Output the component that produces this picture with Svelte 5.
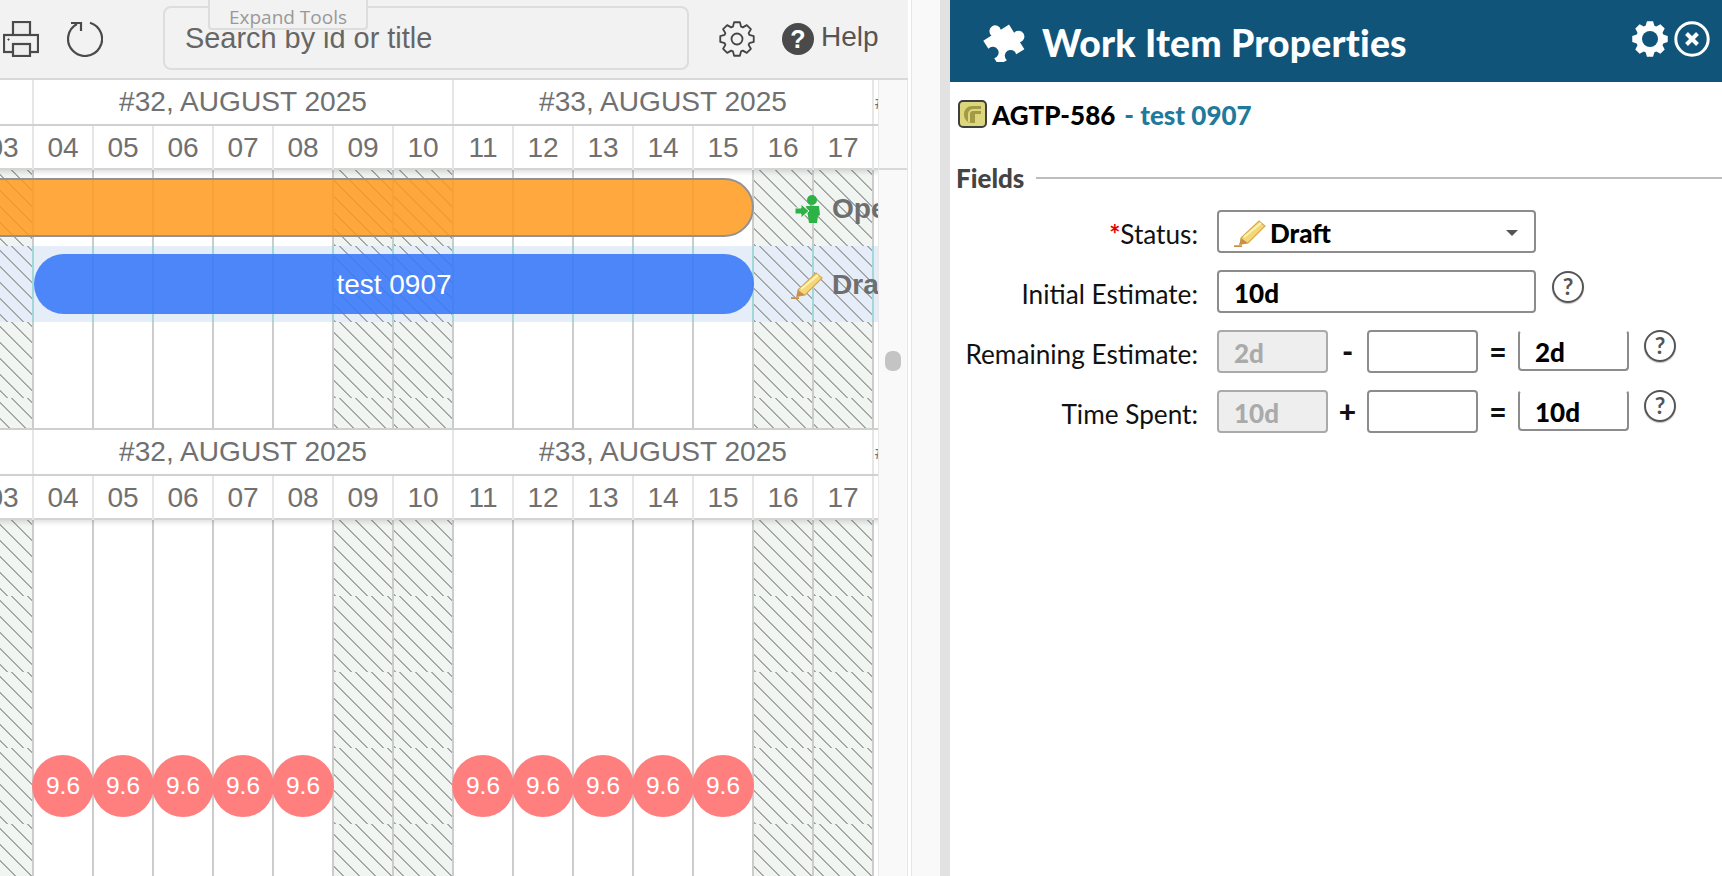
<script lang="ts">
  const days = ['03', '04', '05', '06', '07', '08', '09', '10', '11', '12', '13', '14', '15', '16', '17', '18'];
  const weekend = ['03', '09', '10', '16', '17'];
  const noLoad = [...weekend, '18'];

  function gearPath(cx: number, cy: number, tip: number, root: number, teeth = 8) {
    const step = (Math.PI * 2) / teeth;
    const pts: string[] = [];
    for (let i = 0; i < teeth; i++) {
      const a = i * step;
      [[root, -0.32], [tip, -0.17], [tip, 0.17], [root, 0.32]].forEach(([r, off]) => {
        const x = cx + r * Math.sin(a + off);
        const y = cy - r * Math.cos(a + off);
        pts.push(`${x.toFixed(2)} ${y.toFixed(2)}`);
      });
    }
    return 'M' + pts.join('L') + 'Z';
  }
</script>

{#snippet pencil()}
  <svg class="pencil" viewBox="0 0 32 28" width="32" height="28">
    <path d="M0 27.5h8" stroke="#c98f4a" stroke-width="2.5" />
    <path d="M7 19 25 2l6 5-17 17-7 1z" fill="#f4d878" stroke="#d8a94e" stroke-width="1.2" />
    <path d="M10 18 27 4" stroke="#fff2b8" stroke-width="2" />
    <path d="M5 26l2-7 7 5z" fill="#c98f4a" />
  </svg>
{/snippet}

{#snippet header()}
  <div class="weeks">
    <div class="week"></div>
    <div class="week span">#32, AUGUST 2025</div>
    <div class="week span">#33, AUGUST 2025</div>
    <div class="week tiny">#34</div>
  </div>
  <div class="days">
    {#each days as d}
      <div class="day">{d}</div>
    {/each}
  </div>
{/snippet}

<div class="app">
  <div class="left">
    <div class="toolbar">
      <svg class="printer" viewBox="0 0 36 36" width="36" height="36" fill="none" stroke="#4a4a4a" stroke-width="2.2">
        <rect x="10" y="1" width="17" height="14" fill="#eee" />
        <rect x="1" y="14" width="34" height="17" fill="#f2f2f2" />
        <rect x="10" y="23" width="17" height="12" fill="#eee" />
        <circle cx="5.5" cy="18.5" r="0.7" fill="#4a4a4a" stroke-width="1" />
      </svg>
      <svg class="refresh" viewBox="0 0 36 36" width="36" height="36" fill="none" stroke="#4a4a4a" stroke-width="2.2">
        <path d="M23 1.7A17 17 0 1 1 10 3" />
        <path d="M4 2H14V10" />
      </svg>
      <div class="search">
        <span>Search by id or title</span>
        <div class="expand">Expand Tools</div>
      </div>
      <svg class="gear" viewBox="0 0 36 36" width="36" height="36" fill="none" stroke="#444" stroke-width="1.8">
        <path d={gearPath(18, 18, 17, 13)} stroke-linejoin="round" />
        <circle cx="18" cy="18" r="5.5" />
      </svg>
      <span class="help-dot">?</span>
      <span class="help">Help</span>
    </div>

    <div class="body">
      <div class="timeline">
        <section class="top">
          {@render header()}
          <div class="lanes">
            <div class="lane">
              {#each days as d}
                <div class="cell" class:off={weekend.includes(d)}></div>
              {/each}
              <div class="bar orange"></div>
              <div class="tag">
                <svg viewBox="0 0 32 30" width="32" height="30">
                  <circle cx="21" cy="6" r="5" fill="#2db345" />
                  <path d="M15 12h13l1 9-2 1-1 7h-8l-1-7z" fill="#2db345" />
                  <path d="M4 14h6v-4l8 7-8 7v-4H4z" fill="#2db345" stroke="#f1f5f1" stroke-width="1" />
                </svg>
                <span>Open</span>
              </div>
            </div>
            <div class="lane selected">
              {#each days as d}
                <div class="cell" class:off={weekend.includes(d)}></div>
              {/each}
              <div class="bar blue">test 0907</div>
              <div class="tag">
                {@render pencil()}
                <span>Draft</span>
              </div>
            </div>
            {#each [0, 1] as _}
              <div class="lane">
                {#each days as d}
                  <div class="cell" class:off={weekend.includes(d)}></div>
                {/each}
              </div>
            {/each}
          </div>
        </section>

        <section class="bottom">
          {@render header()}
          <div class="lanes">
            {#each [0, 1, 2, 3, 4] as lane}
              <div class="lane">
                {#each days as d}
                  <div class="cell" class:off={weekend.includes(d)}>
                    {#if lane === 3 && !noLoad.includes(d)}
                      <span class="load">9.6</span>
                    {/if}
                  </div>
                {/each}
              </div>
            {/each}
          </div>
        </section>
      </div>
      <div class="rail">
        <div class="rail-head"></div>
        <div class="thumb"></div>
      </div>
    </div>
  </div>

  <div class="gutter"></div>
  <div class="pane-edge"></div>

  <aside class="panel">
    <header class="panel-head">
      <svg class="puzzle" viewBox="0 0 46 40" width="46" height="40">
        <g transform="rotate(-32 23 20) translate(23 20) scale(1.38) translate(-13 -14)" fill="#fff">
          <path d="M2 6h7a4.2 4.2 0 1 1 8 0h7v7a4.2 4.2 0 1 1 0 8v6h-7a4.2 4.2 0 1 0-8 0H2v-6a4.2 4.2 0 1 0 0-8z" />
        </g>
      </svg>
      <h1>Work Item Properties</h1>
      <svg class="cog" viewBox="0 0 36 36" width="36" height="36">
        <path d={gearPath(18, 18, 18, 14)} fill="#fff" />
        <circle cx="18" cy="18" r="8" fill="#10547a" />
      </svg>
      <svg class="close" viewBox="0 0 36 36" width="36" height="36" fill="none" stroke="#fff">
        <circle cx="18" cy="18" r="16.2" stroke-width="3" />
        <path d="M12.5 12.5l11 11M23.5 12.5l-11 11" stroke-width="4" />
      </svg>
    </header>

    <div class="item">
      <svg viewBox="0 0 29 28" width="29" height="28">
        <rect x="1" y="1" width="27" height="26" rx="4" fill="#dcd67c" stroke="#3f3f3f" stroke-width="2" />
        <path d="M23 6h-9a8 8 0 0 0-8 8v1a8 8 0 0 0 8 8h3v-9h6" fill="#a39a45" />
        <path d="M23 10h-8a4 4 0 0 0-4 4v8" fill="none" stroke="#dcd67c" stroke-width="2" />
      </svg>
      <span class="key">AGTP-586</span>
      <span class="name">- test 0907</span>
    </div>

    <div class="fields-title">
      <span>Fields</span>
      <div class="rule"></div>
    </div>

    <div class="form">
      <div class="row">
        <label><i>*</i>Status:</label>
        <div class="box wide select">
          {@render pencil()}
          <b>Draft</b>
          <em class="caret"></em>
        </div>
      </div>
      <div class="row">
        <label>Initial Estimate:</label>
        <div class="box wide"><b>10d</b></div>
        <span class="q first">?</span>
      </div>
      <div class="row">
        <label>Remaining Estimate:</label>
        <div class="box small disabled"><b>2d</b></div>
        <span class="op">-</span>
        <div class="box small"></div>
        <span class="op eq">=</span>
        <div class="box small result"><b>2d</b></div>
        <span class="q">?</span>
      </div>
      <div class="row">
        <label>Time Spent:</label>
        <div class="box small disabled"><b>10d</b></div>
        <span class="op">+</span>
        <div class="box small"></div>
        <span class="op eq">=</span>
        <div class="box small result"><b>10d</b></div>
        <span class="q">?</span>
      </div>
    </div>
  </aside>
</div>

<style>
  :global(body) {
    margin: 0;
    background: #fff;
  }

  .app {
    display: flex;
    height: 876px;
    overflow: hidden;
    font-family: "Liberation Sans", Arial, sans-serif;
  }

  .left {
    width: 908px;
    flex: none;
    display: flex;
    flex-direction: column;
  }

  .toolbar {
    height: 78px;
    flex: none;
    display: flex;
    align-items: center;
    background: #f2f2f2;
    border-bottom: 2px solid #d9d9d9;
    color: #555;
    font-size: 28.9px;
  }

  .printer {
    margin-left: 3px;
  }

  .refresh {
    margin-left: 28px;
  }

  .search {
    position: relative;
    box-sizing: border-box;
    width: 526px;
    height: 64px;
    margin-left: 60px;
    margin-top: -2px;
    padding: 14px 20px 0 20px;
    border: 2px solid #ddd;
    border-radius: 8px;
    color: #666;
  }

  .expand {
    position: absolute;
    left: 43px;
    top: -8px;
    box-sizing: border-box;
    width: 160px;
    height: 30px;
    padding-top: 5px;
    background: #f2f2f2;
    border: 2px solid #ddd;
    border-top: none;
    border-radius: 0 0 4px 4px;
    text-align: center;
    font-family: "Open Sans", sans-serif;
    font-size: 19px;
    line-height: 24px;
    color: #999;
  }

  .gear {
    margin-left: 30px;
  }

  .help-dot {
    display: flex;
    align-items: center;
    justify-content: center;
    width: 32px;
    height: 32px;
    margin-left: 27px;
    border-radius: 50%;
    background: #4a4a4a;
    color: #fff;
    font-size: 25px;
    font-weight: 700;
  }

  .help {
    margin-left: 7px;
    margin-top: -4px;
    font-size: 28px;
  }

  .body {
    flex: 1;
    display: flex;
    min-height: 0;
  }

  .timeline {
    width: 878px;
    flex: none;
    overflow: hidden;
    background: #fff;
  }

  .top {
    height: 348px;
    overflow: hidden;
  }

  .bottom {
    border-top: 2px solid #cfcfcf;
    position: relative;
  }

  .weeks,
  .days,
  .lane {
    display: grid;
    grid-template-columns: repeat(16, 60px);
    width: 960px;
    margin-left: -28px;
  }

  .weeks {
    height: 44px;
    border-bottom: 2px solid #d4d4d4;
  }

  .week {
    border-left: 2px solid #e6e6e6;
    line-height: 44px;
    text-align: center;
    font-size: 28.1px;
    color: #707070;
    overflow: hidden;
    white-space: nowrap;
  }

  .week.span {
    grid-column: span 7;
  }

  .week.tiny {
    font-size: 20px;
    text-align: left;
    padding-left: 1px;
  }

  .days {
    position: relative;
    z-index: 2;
    height: 42px;
    border-bottom: 2px solid #d4d4d4;
    background: #fff;
    box-shadow: 0 2px 5px rgba(0, 0, 0, 0.14);
  }

  .day {
    border-left: 2px solid #e6e6e6;
    line-height: 44px;
    text-align: center;
    font-size: 28.1px;
    color: #707070;
  }

  .lane {
    position: relative;
    height: 76px;
  }

  .lane.selected {
    background: #e4edf8;
  }

  .cell {
    display: flex;
    align-items: center;
    justify-content: center;
    border-left: 2px solid #ccc;
  }

  .cell.off {
    background: repeating-linear-gradient(45deg, #a6a6a6 0 2px, #f1f5f1 2px 11.314px);
  }

  .selected .cell {
    border-left-color: #a3d8d8;
  }

  .selected .cell.off {
    background: repeating-linear-gradient(45deg, #a6a6a6 0 2px, #e4edf8 2px 11.314px);
  }

  .bar {
    position: absolute;
    box-sizing: border-box;
  }

  .orange {
    left: -30px;
    top: 8px;
    width: 812px;
    height: 59px;
    background: rgba(255, 153, 28, 0.85);
    border: 2px solid #929292;
    border-radius: 30px;
  }

  .blue {
    left: 62px;
    top: 8px;
    width: 720px;
    height: 60px;
    background: rgba(59, 122, 247, 0.9);
    border-radius: 30px;
    color: #fff;
    font-size: 28px;
    line-height: 62px;
    text-align: center;
  }

  .tag {
    position: absolute;
    left: 819px;
    top: 1px;
    height: 76px;
    display: flex;
    align-items: center;
    gap: 9px;
    font-size: 28.1px;
    font-weight: 700;
    color: #6e6e6e;
    white-space: nowrap;
  }

  .load {
    position: relative;
    z-index: 1;
    flex: none;
    width: 62px;
    height: 62px;
    border-radius: 50%;
    background: #ff7f7f;
    color: #fff;
    font-size: 24.5px;
    line-height: 62px;
    text-align: center;
  }

  .rail {
    flex: 1;
    background: #f9f9f9;
    border-left: 1px solid #e8e8e8;
    border-right: 1px solid #e6e6e6;
  }

  .rail-head {
    height: 88px;
    border-bottom: 2px solid #d9d9d9;
  }

  .thumb {
    width: 16px;
    height: 20px;
    margin: 181px 0 0 6px;
    border-radius: 7px;
    background: #c4c4c4;
  }

  .gutter {
    width: 4px;
    flex: none;
    background: #fff;
    border-right: 1px solid #e6e6e6;
    box-sizing: border-box;
  }

  .pane-edge {
    width: 38px;
    flex: none;
    box-sizing: border-box;
    background: #f9f9f9;
    border-right: 10px solid #e2e2e2;
  }

  .panel {
    flex: 1;
    min-width: 0;
    font-family: Lato, sans-serif;
    color: #111;
  }

  .panel-head {
    height: 82px;
    display: flex;
    align-items: center;
    background: #10547a;
    color: #fff;
  }

  .puzzle {
    margin-left: 29px;
    margin-top: 2px;
  }

  .panel-head h1 {
    margin: 2px 0 0 17px;
    font-size: 37.3px;
    font-weight: 900;
    letter-spacing: 0.2px;
  }

  .cog {
    margin-left: auto;
    margin-top: -5px;
  }

  .close {
    margin: -5px 12px 0 6px;
  }

  .item {
    display: flex;
    align-items: center;
    height: 28px;
    margin: 18px 0 0 8px;
    font-size: 26px;
    font-weight: 900;
  }

  .item span {
    padding-top: 2px;
  }

  .key {
    margin-left: 5px;
    color: #000;
  }

  .name {
    margin-left: 9px;
    color: #1f7a9c;
  }

  .fields-title {
    display: flex;
    align-items: center;
    height: 30px;
    margin: 35px 0 0 6px;
    font-size: 26px;
    font-weight: 900;
    color: #444;
  }

  .rule {
    flex: 1;
    height: 2px;
    margin-left: 12px;
    background: #bdbdbd;
  }

  .form {
    display: flex;
    flex-direction: column;
    gap: 17px;
    margin-top: 17px;
  }

  .row {
    display: flex;
    align-items: flex-start;
    height: 43px;
  }

  .row label {
    box-sizing: border-box;
    width: 248px;
    margin-right: 19px;
    flex: none;
    text-align: right;
    font-size: 26.2px;
    line-height: 48px;
    color: #111;
  }

  .row label i {
    color: #e00000;
    font-style: normal;
    font-weight: 700;
  }

  .box {
    box-sizing: border-box;
    height: 43px;
    padding: 2px 0 0 15px;
    border: 2px solid #8c8c8c;
    border-radius: 4px;
    background: #fff;
    display: flex;
    align-items: center;
    font-size: 26px;
    color: #000;
  }

  .box b {
    font-weight: 900;
  }

  .box.wide {
    width: 319px;
  }

  .box.small {
    width: 111px;
  }

  .box.select {
    padding-left: 15px;
    padding-right: 16px;
    gap: 4px;
  }

  .caret {
    margin-left: auto;
    border-left: 6px solid transparent;
    border-right: 6px solid transparent;
    border-top: 6px solid #555;
  }

  .box.disabled {
    background: #eee;
    border-color: #aaa;
    color: #aaa;
  }

  .box.result {
    height: 41px;
    border-top-color: #fff;
  }

  .op {
    width: 39px;
    flex: none;
    text-align: center;
    font-size: 30px;
    font-weight: 900;
    line-height: 43px;
  }

  .op.eq {
    width: 40px;
  }

  .q {
    box-sizing: border-box;
    width: 32px;
    height: 32px;
    flex: none;
    margin-left: 15px;
    border: 2.5px solid #555;
    border-radius: 50%;
    box-shadow: 0 1px 1px rgba(0, 0, 0, 0.25);
    font-size: 23px;
    font-weight: 700;
    line-height: 27px;
    text-align: center;
    color: #555;
  }

  .q.first {
    margin-left: 16px;
    margin-top: 1px;
  }
</style>
